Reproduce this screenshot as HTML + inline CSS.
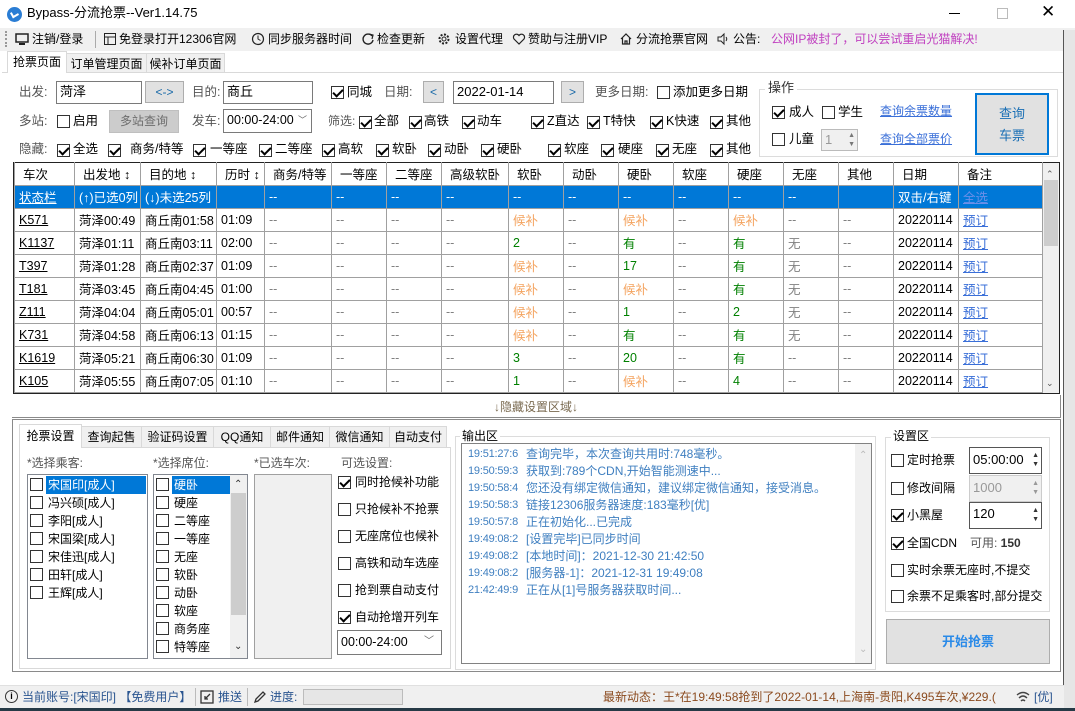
<!DOCTYPE html>
<html><head><meta charset="utf-8"><style>
*{box-sizing:border-box;margin:0;padding:0}
body{width:1075px;height:711px;overflow:hidden;background:#fff;font-family:"Liberation Sans","Noto Sans CJK SC",sans-serif;font-size:12px;color:#000;position:relative}
.a{position:absolute}
.t{position:absolute;white-space:nowrap;line-height:16px}
.g{color:#555}
.cb{position:absolute;width:13px;height:13px;border:1px solid #333;background:#fff}
.k::after{content:"";position:absolute;left:3px;top:0px;width:4px;height:8px;border:solid #000;border-width:0 2px 2px 0;transform:rotate(45deg)}
.inp{position:absolute;border:1px solid #7a7a7a;background:#fff;padding-left:3px;line-height:20px;font-size:13px}
.btn{position:absolute;border:1px solid #adadad;background:#e1e1e1;text-align:center}
.lk{color:#3a6fd8;text-decoration:underline}
table{border-collapse:collapse;table-layout:fixed}
td{border:1px solid #a0a0a0;height:23px;padding:0 0 0 4px;white-space:nowrap;overflow:hidden;font-size:12.5px}
tr.h td{padding-left:8px;border-top:none}
.d{color:#808080}.o{color:#f4a460}.gr{color:#008000}.w{color:#808080}
.sel td{background:#0078d7;color:#fff;border-color:#a0a0a0}
.tab{position:absolute;border:1px solid #d9d9d9;background:#f0f0f0;text-align:center;line-height:20px}
.list{position:absolute;border:1px solid #828790;background:#fff}
.li{position:absolute;left:2px;height:18px;line-height:18px;white-space:nowrap}
.li .cb{left:0;top:2px}
.li span{position:absolute;left:16px;padding:0 2px}
.log{position:absolute;left:6px;white-space:nowrap;color:#3f7fc0;font-size:12px;line-height:17px;padding-left:58px}
.log b{font-weight:normal;position:absolute;left:0;font-size:11px;letter-spacing:-0.2px}
.r2{font-size:12.5px}
</style></head><body>
<!-- title bar -->
<div class="a" style="left:7px;top:7px;width:15px;height:15px;border-radius:50%;background:#2a7dd4"></div>
<div class="a" style="left:11px;top:11px;width:7px;height:6px;border-left:2px solid #fff;border-bottom:2px solid #fff;transform:rotate(-30deg)"></div>
<div class="t" style="left:27px;top:5px;font-size:13px">Bypass-分流抢票--Ver1.14.75</div>
<div class="a" style="left:949px;top:13px;width:11px;height:1px;background:#000"></div>
<div class="a" style="left:997px;top:8px;width:11px;height:11px;border:1px solid #bbb"></div>
<div class="t" style="left:1041px;top:4px;font-size:17px;font-weight:300">✕</div>
<!-- toolbar -->
<div class="a" style="left:0;top:28px;width:1075px;height:23px;background:#f0f0f0"></div>
<div class="a" style="left:5px;top:31px;width:2px;height:16px;border-left:2px dotted #999"></div>
<svg class="a" style="left:15px;top:32px" width="14" height="14"><rect x="1" y="2" width="12" height="8" fill="none" stroke="#222" stroke-width="1.5"/><rect x="4" y="11" width="6" height="2" fill="#222"/></svg>
<div class="t" style="left:32px;top:31px">注销/登录</div>
<div class="a" style="left:95px;top:31px;width:1px;height:17px;background:#aaa"></div>
<svg class="a" style="left:103px;top:32px" width="14" height="14"><rect x="1.5" y="1.5" width="11" height="11" fill="none" stroke="#222"/><path d="M1.5 5H12.5M5 5V12.5" stroke="#222"/></svg>
<div class="t" style="left:119px;top:31px">免登录打开12306官网</div>
<svg class="a" style="left:251px;top:32px" width="14" height="14"><circle cx="7" cy="7" r="5.5" fill="none" stroke="#222" stroke-width="1.2"/><path d="M7 3.5V7L9.5 8.5" stroke="#222" fill="none"/></svg>
<div class="t" style="left:268px;top:31px">同步服务器时间</div>
<svg class="a" style="left:361px;top:32px" width="14" height="14"><path d="M11 4A5 5 0 1 0 12 8" fill="none" stroke="#222" stroke-width="1.4"/><path d="M8 2L12 3L11 7" fill="none" stroke="#222" stroke-width="1.2"/></svg>
<div class="t" style="left:377px;top:31px">检查更新</div>
<svg class="a" style="left:437px;top:32px" width="14" height="14"><circle cx="7" cy="7" r="4.5" fill="none" stroke="#222" stroke-width="2" stroke-dasharray="2 1.5"/><circle cx="7" cy="7" r="2" fill="none" stroke="#222"/></svg>
<div class="t" style="left:455px;top:31px">设置代理</div>
<svg class="a" style="left:512px;top:32px" width="14" height="14"><path d="M7 12L2 7A2.8 2.8 0 0 1 7 3.5A2.8 2.8 0 0 1 12 7Z" fill="none" stroke="#222" stroke-width="1.2"/></svg>
<div class="t" style="left:528px;top:31px">赞助与注册VIP</div>
<svg class="a" style="left:619px;top:32px" width="14" height="14"><path d="M2 7L7 2L12 7M3.5 6V12H10.5V6M6 12V9H8V12" fill="none" stroke="#222" stroke-width="1.2"/></svg>
<div class="t" style="left:636px;top:31px">分流抢票官网</div>
<svg class="a" style="left:716px;top:32px" width="14" height="14"><path d="M2 5H5L8 2V12L5 9H2Z" fill="none" stroke="#222"/><path d="M10 5Q11.5 7 10 9" fill="none" stroke="#222"/></svg>
<div class="t" style="left:733px;top:31px">公告:</div>
<div class="t" style="left:771px;top:31px;color:#c040c0">公网IP被封了，可以尝试重启光猫解决!</div>
<!-- top tabs -->
<div class="a" style="left:2px;top:72px;width:1062px;height:1px;background:#d9d9d9"></div>
<div class="tab" style="left:66px;top:53px;width:81px;height:20px">订单管理页面</div>
<div class="tab" style="left:146px;top:53px;width:79px;height:20px">候补订单页面</div>
<div class="a" style="left:7px;top:51px;width:60px;height:22px;background:#fff;border:1px solid #d9d9d9;border-bottom:none;text-align:center;line-height:20px">抢票页面</div>
<!-- row1 -->
<div class="t g r2" style="left:19px;top:84px">出发:</div>
<div class="inp" style="left:56px;top:81px;width:86px;height:23px">菏泽</div>
<div class="btn" style="left:145px;top:81px;width:39px;height:22px;color:#1a6aa8;line-height:20px">&lt;-&gt;</div>
<div class="t g r2" style="left:192px;top:84px">目的:</div>
<div class="inp" style="left:223px;top:81px;width:90px;height:23px">商丘</div>
<div class="cb k" style="left:331px;top:86px"></div><div class="t r2" style="left:347px;top:84px">同城</div>
<div class="t g r2" style="left:384px;top:84px">日期:</div>
<div class="btn" style="left:423px;top:81px;width:21px;height:22px;color:#1a6aa8;line-height:20px">&lt;</div>
<div class="inp" style="left:453px;top:81px;width:101px;height:23px">2022-01-14</div>
<div class="btn" style="left:561px;top:81px;width:23px;height:22px;color:#1a6aa8;line-height:20px">&gt;</div>
<div class="t g r2" style="left:595px;top:84px">更多日期:</div>
<div class="cb" style="left:657px;top:86px"></div><div class="t r2" style="left:673px;top:84px">添加更多日期</div>
<!-- row2 -->
<div class="t g r2" style="left:19px;top:113px">多站:</div>
<div class="cb" style="left:57px;top:115px"></div><div class="t r2" style="left:73px;top:113px">启用</div>
<div class="btn" style="left:109px;top:110px;width:70px;height:23px;background:#cccccc;border-color:#bfbfbf;color:#6d6d6d;line-height:21px">多站查询</div>
<div class="t g r2" style="left:192px;top:113px">发车:</div>
<div class="inp" style="left:223px;top:109px;width:89px;height:24px;line-height:21px;font-size:12.5px">00:00-24:00 <span style="position:absolute;right:4px;color:#666;font-size:9px">﹀</span></div>
<div class="t g" style="left:328px;top:113px">筛选:</div>
<div class="cb k" style="left:359px;top:116px"></div><div class="t r2" style="left:374px;top:113px">全部</div>
<div class="cb k" style="left:409px;top:116px"></div><div class="t r2" style="left:424px;top:113px">高铁</div>
<div class="cb k" style="left:462px;top:116px"></div><div class="t r2" style="left:477px;top:113px">动车</div>
<div class="cb k" style="left:531px;top:116px"></div><div class="t r2" style="left:547px;top:113px">Z直达</div>
<div class="cb k" style="left:587px;top:116px"></div><div class="t r2" style="left:603px;top:113px">T特快</div>
<div class="cb k" style="left:650px;top:116px"></div><div class="t r2" style="left:666px;top:113px">K快速</div>
<div class="cb k" style="left:710px;top:116px"></div><div class="t r2" style="left:726px;top:113px">其他</div>
<!-- row3 -->
<div class="t g r2" style="left:19px;top:141px">隐藏:</div>
<div class="cb k" style="left:57px;top:144px"></div><div class="t r2" style="left:73px;top:141px">全选</div>
<div class="cb k" style="left:108px;top:144px"></div><div class="t r2" style="left:130px;top:141px">商务/特等</div>
<div class="cb k" style="left:193px;top:144px"></div><div class="t r2" style="left:210px;top:141px">一等座</div>
<div class="cb k" style="left:259px;top:144px"></div><div class="t r2" style="left:275px;top:141px">二等座</div>
<div class="cb k" style="left:322px;top:144px"></div><div class="t r2" style="left:338px;top:141px">高软</div>
<div class="cb k" style="left:376px;top:144px"></div><div class="t r2" style="left:392px;top:141px">软卧</div>
<div class="cb k" style="left:428px;top:144px"></div><div class="t r2" style="left:444px;top:141px">动卧</div>
<div class="cb k" style="left:481px;top:144px"></div><div class="t r2" style="left:497px;top:141px">硬卧</div>
<div class="cb k" style="left:548px;top:144px"></div><div class="t r2" style="left:564px;top:141px">软座</div>
<div class="cb k" style="left:601px;top:144px"></div><div class="t r2" style="left:618px;top:141px">硬座</div>
<div class="cb k" style="left:656px;top:144px"></div><div class="t r2" style="left:672px;top:141px">无座</div>
<div class="cb k" style="left:710px;top:144px"></div><div class="t r2" style="left:726px;top:141px">其他</div>
<!-- operation group -->
<div class="a" style="left:759px;top:89px;width:299px;height:68px;border:1px solid #dcdcdc"></div>
<div class="t" style="left:765px;top:80px;background:#fff;padding:0 3px;font-size:13px;color:#333">操作</div>
<div class="cb k" style="left:772px;top:106px"></div><div class="t r2" style="left:789px;top:104px">成人</div>
<div class="cb" style="left:822px;top:106px"></div><div class="t r2" style="left:838px;top:104px">学生</div>
<div class="t lk" style="left:880px;top:103px">查询余票数量</div>
<div class="cb" style="left:772px;top:133px"></div><div class="t r2" style="left:789px;top:131px">儿童</div>
<div class="a" style="left:821px;top:129px;width:37px;height:22px;border:1px solid #bbb;background:#f0f0f0;color:#999;padding-left:3px;line-height:20px;font-size:13px">1<span style="position:absolute;right:2px;top:1px;font-size:7px;line-height:9px;color:#777">▲<br>▼</span></div>
<div class="t lk" style="left:880px;top:131px">查询全部票价</div>
<div class="a" style="left:975px;top:93px;width:74px;height:62px;border:2px solid #0078d7;background:#e1e1e1;text-align:center;color:#1a6fb5;font-size:13px;line-height:22px;padding-top:8px">查询<br>车票</div>
<!-- table -->
<div class="a" style="left:13px;top:162px;width:1047px;height:232px;border:1px solid #222;background:#fff"></div>
<table class="a" style="left:14px;top:162px;width:1029px">
<colgroup><col style="width:60px"><col style="width:66px"><col style="width:76px"><col style="width:48px"><col style="width:67px"><col style="width:55px"><col style="width:55px"><col style="width:67px"><col style="width:55px"><col style="width:55px"><col style="width:55px"><col style="width:55px"><col style="width:55px"><col style="width:55px"><col style="width:55px"><col style="width:65px"><col style="width:84px"></colgroup>
<tr class="h"><td>车次</td><td>出发地 ↕</td><td>目的地 ↕</td><td>历时 ↕</td><td>商务/特等</td><td>一等座</td><td>二等座</td><td>高级软卧</td><td>软卧</td><td>动卧</td><td>硬卧</td><td>软座</td><td>硬座</td><td>无座</td><td>其他</td><td>日期</td><td>备注</td></tr>
<tr class="sel"><td style="text-decoration:underline">状态栏</td><td>(↑)已选0列</td><td>(↓)未选25列</td><td></td><td>--</td><td>--</td><td>--</td><td>--</td><td>--</td><td>--</td><td>--</td><td>--</td><td>--</td><td>--</td><td></td><td>双击/右键</td><td style="color:#6b8fe8;text-decoration:underline">全选</td></tr>
<tr><td style="text-decoration:underline">K571</td><td>菏泽00:49</td><td>商丘南01:58</td><td>01:09</td><td class="d">--</td><td class="d">--</td><td class="d">--</td><td class="d">--</td><td class="o">候补</td><td class="d">--</td><td class="o">候补</td><td class="d">--</td><td class="o">候补</td><td class="d">--</td><td class="d">--</td><td>20220114</td><td class="lk">预订</td></tr>
<tr><td style="text-decoration:underline">K1137</td><td>菏泽01:11</td><td>商丘南03:11</td><td>02:00</td><td class="d">--</td><td class="d">--</td><td class="d">--</td><td class="d">--</td><td class="gr">2</td><td class="d">--</td><td class="gr">有</td><td class="d">--</td><td class="gr">有</td><td class="w">无</td><td class="d">--</td><td>20220114</td><td class="lk">预订</td></tr>
<tr><td style="text-decoration:underline">T397</td><td>菏泽01:28</td><td>商丘南02:37</td><td>01:09</td><td class="d">--</td><td class="d">--</td><td class="d">--</td><td class="d">--</td><td class="o">候补</td><td class="d">--</td><td class="gr">17</td><td class="d">--</td><td class="gr">有</td><td class="w">无</td><td class="d">--</td><td>20220114</td><td class="lk">预订</td></tr>
<tr><td style="text-decoration:underline">T181</td><td>菏泽03:45</td><td>商丘南04:45</td><td>01:00</td><td class="d">--</td><td class="d">--</td><td class="d">--</td><td class="d">--</td><td class="o">候补</td><td class="d">--</td><td class="o">候补</td><td class="d">--</td><td class="gr">有</td><td class="w">无</td><td class="d">--</td><td>20220114</td><td class="lk">预订</td></tr>
<tr><td style="text-decoration:underline">Z111</td><td>菏泽04:04</td><td>商丘南05:01</td><td>00:57</td><td class="d">--</td><td class="d">--</td><td class="d">--</td><td class="d">--</td><td class="o">候补</td><td class="d">--</td><td class="gr">1</td><td class="d">--</td><td class="gr">2</td><td class="w">无</td><td class="d">--</td><td>20220114</td><td class="lk">预订</td></tr>
<tr><td style="text-decoration:underline">K731</td><td>菏泽04:58</td><td>商丘南06:13</td><td>01:15</td><td class="d">--</td><td class="d">--</td><td class="d">--</td><td class="d">--</td><td class="o">候补</td><td class="d">--</td><td class="gr">有</td><td class="d">--</td><td class="gr">有</td><td class="w">无</td><td class="d">--</td><td>20220114</td><td class="lk">预订</td></tr>
<tr><td style="text-decoration:underline">K1619</td><td>菏泽05:21</td><td>商丘南06:30</td><td>01:09</td><td class="d">--</td><td class="d">--</td><td class="d">--</td><td class="d">--</td><td class="gr">3</td><td class="d">--</td><td class="gr">20</td><td class="d">--</td><td class="gr">有</td><td class="d">--</td><td class="d">--</td><td>20220114</td><td class="lk">预订</td></tr>
<tr><td style="text-decoration:underline">K105</td><td>菏泽05:55</td><td>商丘南07:05</td><td>01:10</td><td class="d">--</td><td class="d">--</td><td class="d">--</td><td class="d">--</td><td class="gr">1</td><td class="d">--</td><td class="o">候补</td><td class="d">--</td><td class="gr">4</td><td class="d">--</td><td class="d">--</td><td>20220114</td><td class="lk">预订</td></tr>
</table>
<div class="a" style="left:1043px;top:163px;width:16px;height:230px;background:#f0f0f0"></div>
<div class="a" style="left:1044px;top:180px;width:14px;height:66px;background:#cdcdcd"></div>
<div class="t" style="left:1046px;top:166px;font-size:9px;color:#555">⌃</div>
<div class="t" style="left:1046px;top:375px;font-size:9px;color:#555">⌄</div>
<!-- hide bar -->
<div class="a" style="left:12px;top:395px;width:1049px;height:23px;border:1px solid #8a8a8a;border-top:none;border-left:none"></div>
<div class="t" style="left:494px;top:399px;color:#7a6a50">↓隐藏设置区域↓</div>
<!-- bottom panel -->
<div class="a" style="left:12px;top:419px;width:1049px;height:253px;border:1px solid #8a8a8a"></div>
<div class="tab" style="left:81px;top:426px;width:61px;height:22px">查询起售</div>
<div class="tab" style="left:141px;top:426px;width:73px;height:22px">验证码设置</div>
<div class="tab" style="left:213px;top:426px;width:58px;height:22px">QQ通知</div>
<div class="tab" style="left:270px;top:426px;width:60px;height:22px">邮件通知</div>
<div class="tab" style="left:329px;top:426px;width:61px;height:22px">微信通知</div>
<div class="tab" style="left:389px;top:426px;width:58px;height:22px">自动支付</div>
<div class="a" style="left:19px;top:447px;width:432px;height:222px;border:1px solid #d9d9d9;background:#fff"></div>
<div class="a" style="left:19px;top:424px;width:63px;height:24px;background:#fff;border:1px solid #d9d9d9;border-bottom:none;text-align:center;line-height:22px">抢票设置</div>
<div class="t g" style="left:27px;top:455px">*选择乘客:</div>
<div class="t g" style="left:153px;top:455px">*选择席位:</div>
<div class="t g" style="left:254px;top:455px">*已选车次:</div>
<div class="t g" style="left:341px;top:455px">可选设置:</div>
<div class="list" style="left:27px;top:474px;width:121px;height:185px">
<div class="li" style="top:1px"><div class="cb"></div><span style="background:#0078d7;color:#fff;width:100px">宋国印[成人]</span></div>
<div class="li" style="top:19px"><div class="cb"></div><span>冯兴硕[成人]</span></div>
<div class="li" style="top:37px"><div class="cb"></div><span>李阳[成人]</span></div>
<div class="li" style="top:55px"><div class="cb"></div><span>宋国梁[成人]</span></div>
<div class="li" style="top:73px"><div class="cb"></div><span>宋佳迅[成人]</span></div>
<div class="li" style="top:91px"><div class="cb"></div><span>田轩[成人]</span></div>
<div class="li" style="top:109px"><div class="cb"></div><span>王辉[成人]</span></div>
</div>
<div class="list" style="left:153px;top:474px;width:95px;height:185px">
<div class="li" style="top:1px"><div class="cb"></div><span style="background:#0078d7;color:#fff;width:59px">硬卧</span></div>
<div class="li" style="top:19px"><div class="cb"></div><span>硬座</span></div>
<div class="li" style="top:37px"><div class="cb"></div><span>二等座</span></div>
<div class="li" style="top:55px"><div class="cb"></div><span>一等座</span></div>
<div class="li" style="top:73px"><div class="cb"></div><span>无座</span></div>
<div class="li" style="top:91px"><div class="cb"></div><span>软卧</span></div>
<div class="li" style="top:109px"><div class="cb"></div><span>动卧</span></div>
<div class="li" style="top:127px"><div class="cb"></div><span>软座</span></div>
<div class="li" style="top:145px"><div class="cb"></div><span>商务座</span></div>
<div class="li" style="top:163px"><div class="cb"></div><span>特等座</span></div>
<div class="a" style="left:76px;top:0;width:17px;height:183px;background:#f0f0f0"></div>
<div class="a" style="left:77px;top:18px;width:15px;height:122px;background:#cdcdcd"></div>
<div class="t" style="left:80px;top:2px;font-size:10px;color:#333">⌃</div>
<div class="t" style="left:80px;top:164px;font-size:10px;color:#333">⌄</div>
</div>
<div class="a" style="left:254px;top:474px;width:78px;height:185px;border:1px solid #a0a0a0;background:#f0f0f0"></div>
<div class="cb k" style="left:338px;top:476px"></div><div class="t" style="left:355px;top:474px">同时抢候补功能</div>
<div class="cb" style="left:338px;top:503px"></div><div class="t" style="left:355px;top:501px">只抢候补不抢票</div>
<div class="cb" style="left:338px;top:530px"></div><div class="t" style="left:355px;top:528px">无座席位也候补</div>
<div class="cb" style="left:338px;top:557px"></div><div class="t" style="left:355px;top:555px">高铁和动车选座</div>
<div class="cb" style="left:338px;top:584px"></div><div class="t" style="left:355px;top:582px">抢到票自动支付</div>
<div class="cb k" style="left:338px;top:611px"></div><div class="t" style="left:355px;top:609px">自动抢增开列车</div>
<div class="inp" style="left:337px;top:630px;width:105px;height:25px;font-size:12.5px;line-height:22px">00:00-24:00<span style="position:absolute;right:7px;color:#666;font-size:10px">﹀</span></div>
<!-- output -->
<div class="a" style="left:455px;top:436px;width:421px;height:234px;border:1px solid #dcdcdc"></div>
<div class="t" style="left:460px;top:428px;background:#fff;padding:0 2px">输出区</div>
<div class="a" style="left:461px;top:443px;width:411px;height:221px;border:1px solid #828282;background:#fff">
<div class="log" style="top:2px"><b>19:51:27:6</b>查询完毕，本次查询共用时:748毫秒。</div>
<div class="log" style="top:19px"><b>19:50:59:3</b>获取到:789个CDN,开始智能测速中...</div>
<div class="log" style="top:36px"><b>19:50:58:4</b>您还没有绑定微信通知，建议绑定微信通知，接受消息。</div>
<div class="log" style="top:53px"><b>19:50:58:3</b>链接12306服务器速度:183毫秒[优]</div>
<div class="log" style="top:70px"><b>19:50:57:8</b>正在初始化...已完成</div>
<div class="log" style="top:87px"><b>19:49:08:2</b>[设置完毕]已同步时间</div>
<div class="log" style="top:104px"><b>19:49:08:2</b>[本地时间]：2021-12-30 21:42:50</div>
<div class="log" style="top:121px"><b>19:49:08:2</b>[服务器-1]：2021-12-31 19:49:08</div>
<div class="log" style="top:138px"><b>21:42:49:9</b>正在从[1]号服务器获取时间...</div>
<div class="a" style="left:393px;top:0;width:16px;height:219px;background:#f0f0f0"></div>
<div class="t" style="left:397px;top:4px;font-size:10px;color:#bbb">⌃</div>
<div class="t" style="left:397px;top:198px;font-size:10px;color:#bbb">⌄</div>
</div>
<!-- settings -->
<div class="a" style="left:885px;top:437px;width:165px;height:175px;border:1px solid #dcdcdc"></div>
<div class="t" style="left:891px;top:428px;background:#fff;padding:0 2px">设置区</div>
<div class="cb" style="left:891px;top:454px"></div><div class="t" style="left:907px;top:452px">定时抢票</div>
<div class="inp" style="left:969px;top:447px;width:73px;height:27px;line-height:24px;font-size:13px;border-color:#555">05:00:00<span style="position:absolute;right:2px;top:3px;font-size:7px;line-height:9px;color:#333">▲<br>▼</span></div>
<div class="cb" style="left:891px;top:482px"></div><div class="t" style="left:907px;top:480px">修改间隔</div>
<div class="inp" style="left:969px;top:475px;width:73px;height:27px;line-height:24px;font-size:13px;background:#f0f0f0;border-color:#ccc;color:#999">1000<span style="position:absolute;right:2px;top:3px;font-size:7px;line-height:9px;color:#999">▲<br>▼</span></div>
<div class="cb k" style="left:891px;top:509px"></div><div class="t" style="left:907px;top:507px">小黑屋</div>
<div class="inp" style="left:969px;top:502px;width:73px;height:27px;line-height:22px;font-size:13px;border-color:#555">120<span style="position:absolute;right:2px;top:3px;font-size:7px;line-height:9px;color:#333">▲<br>▼</span></div>
<div class="cb k" style="left:891px;top:537px"></div><div class="t" style="left:907px;top:535px">全国CDN</div>
<div class="t" style="left:970px;top:535px;color:#555">可用: <b style="color:#333">150</b></div>
<div class="cb" style="left:891px;top:564px"></div><div class="t" style="left:907px;top:562px">实时余票无座时,不提交</div>
<div class="cb" style="left:891px;top:590px"></div><div class="t" style="left:907px;top:588px">余票不足乘客时,部分提交</div>
<div class="btn" style="left:886px;top:619px;width:164px;height:45px;line-height:43px;color:#2a8ae8;font-weight:bold;font-size:13px">开始抢票</div>
<!-- right window edge -->
<div class="a" style="left:1063px;top:30px;width:1px;height:680px;background:#555"></div>
<div class="a" style="left:1064px;top:30px;width:11px;height:681px;background:#e6e6e6"></div>
<!-- status bar -->
<div class="a" style="left:0;top:685px;width:1064px;height:23px;background:#f0f0f0;border-top:1px solid #e0e0e0"></div>
<div class="a" style="left:0;top:708px;width:1075px;height:3px;background:#263a46"></div>
<div class="a" style="left:5px;top:690px;width:13px;height:13px;border:1.3px solid #333;border-radius:50%;text-align:center;font-size:9px;line-height:10px;font-weight:bold">i</div>
<div class="t" style="left:22px;top:689px;color:#2a5590">当前账号:[宋国印] 【免费用户】</div>
<div class="a" style="left:195px;top:688px;width:1px;height:18px;background:#bbb"></div>
<svg class="a" style="left:200px;top:690px" width="14" height="14"><rect x="1" y="1" width="12" height="12" fill="none" stroke="#333" stroke-width="1.3"/><path d="M10 4L5 9M5 6V9H8" fill="none" stroke="#333" stroke-width="1.3"/></svg>
<div class="t" style="left:218px;top:689px;color:#2a5590">推送</div>
<div class="a" style="left:247px;top:688px;width:1px;height:18px;background:#bbb"></div>
<svg class="a" style="left:253px;top:690px" width="14" height="14"><path d="M2 12L3 9L10 2L12 4L5 11Z" fill="none" stroke="#333" stroke-width="1.3"/></svg>
<div class="t" style="left:270px;top:689px;color:#2a5590">进度:</div>
<div class="a" style="left:303px;top:689px;width:100px;height:16px;border:1px solid #bcbcbc;background:#e6e6e6"></div>
<div class="t" style="left:603px;top:689px;color:#8b4a1e">最新动态：王*在19:49:58抢到了2022-01-14,上海南-贵阳,K495车次,¥229.(</div>
<svg class="a" style="left:1015px;top:690px" width="16" height="14"><path d="M2 5Q8 0 14 5M4 8Q8 4 12 8M6 11Q8 9 10 11" fill="none" stroke="#444" stroke-width="1.4"/></svg>
<div class="t" style="left:1034px;top:689px;color:#2a5590">[优]</div>
</body></html>
